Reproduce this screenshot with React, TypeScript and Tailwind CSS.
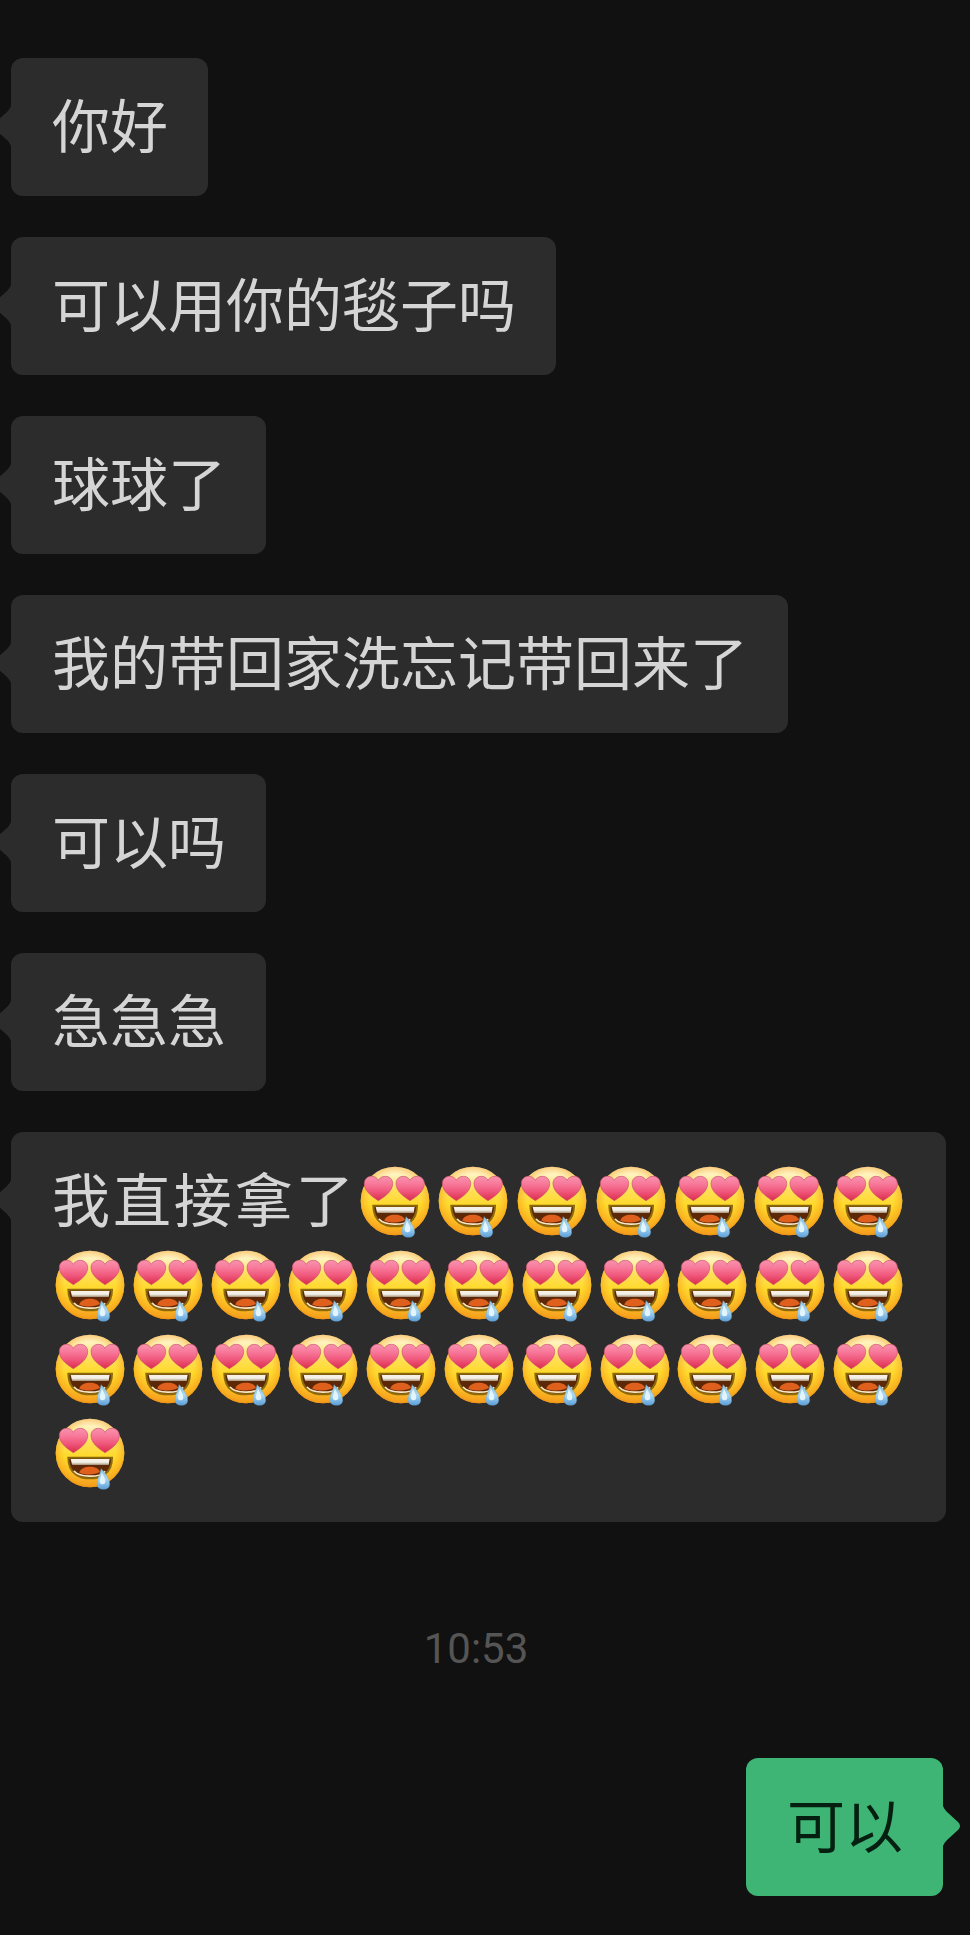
import type { ReactNode } from "react"

const messages = ["你好", "可以用你的毯子吗", "球球了", "我的带回家洗忘记带回来了", "可以吗", "急急急"]
const lastMessage = "我直接拿了"
const emojiCount = 30

function EmojiDefs() {
    return <svg className="absolute h-0 w-0" aria-hidden="true">
        <defs>
            <linearGradient id="face" x1="0" y1="0" x2="0" y2="1">
                <stop offset="0" stopColor="#fff3d2" />
                <stop offset="0.12" stopColor="#fff3bd" />
                <stop offset="0.34" stopColor="#ffe05a" />
                <stop offset="0.55" stopColor="#ffd92c" />
                <stop offset="0.8" stopColor="#fdc026" />
                <stop offset="1" stopColor="#f5a020" />
            </linearGradient>
            <radialGradient id="rim" cx="0.5" cy="0.48" r="0.53">
                <stop offset="0.7" stopColor="#f8a51c" stopOpacity="0" />
                <stop offset="0.92" stopColor="#f59d18" stopOpacity="0.5" />
                <stop offset="1" stopColor="#e88a12" stopOpacity="0.95" />
            </radialGradient>
            <linearGradient id="heart" x1="0" y1="0" x2="0" y2="1">
                <stop offset="0" stopColor="#f792ae" />
                <stop offset="0.3" stopColor="#f87a9b" />
                <stop offset="0.6" stopColor="#f05a7e" />
                <stop offset="1" stopColor="#dc2c4c" />
            </linearGradient>
            <linearGradient id="drop" x1="0" y1="0" x2="0" y2="1">
                <stop offset="0" stopColor="#8dbcd8" />
                <stop offset="0.5" stopColor="#a9d7f2" />
                <stop offset="1" stopColor="#5c9fda" />
            </linearGradient>
            <path id="heart-shape" d="M42 73C29 64 0 47 0 22C0 8 10 0 22 0C32 0 39 5 42 12C45 5 53 0 63 0C75 0 85 8 85 22C85 47 56 64 42 73Z" />
            <symbol id="drool" viewBox="0 0 228 228">
                <circle cx="114" cy="114" r="103" fill="url(#face)" />
                <circle cx="114" cy="114" r="103" fill="url(#rim)" />
                <use href="#heart-shape" x="22" y="40" fill="url(#heart)" stroke="#c9566a" strokeWidth="2" />
                <use href="#heart-shape" x="117" y="40" fill="url(#heart)" stroke="#c9566a" strokeWidth="2" />
                <path d="M49 128H180C180 150 172 168 158 178C136 194 92 194 71 178C57 168 49 150 49 128Z" fill="#5c2808" stroke="#8c6a0c" strokeWidth="6" />
                <path d="M56 132H173L170 147H60Z" fill="#f5f1e8" />
                <path d="M59 143H171L170 149H61Z" fill="#cfc7b4" />
                <path d="M82 173C86 151 138 149 144 171C130 180 98 181 82 173Z" fill="#df5f1c" />
                <path d="M67 169C82 187 142 189 158 170" fill="none" stroke="#fbe6c4" strokeWidth="5" strokeLinecap="round" />
                <path d="M147 161C154 166 173 190 173 207C173 217 166 223 155 223C143 223 135 217 135 206C135 191 145 177 147 161Z" fill="url(#drop)" stroke="#6b9dbb" strokeWidth="1" />
                <path d="M149 172C153 180 161 192 160 201C159 209 148 210 144 203C141 196 149 184 149 172Z" fill="#e2f4fc" />
            </symbol>
        </defs>
    </svg>
}

function Emoji() {
    return <svg className="h-[76px] w-[76px] shrink-0" role="img" aria-label="色流口水">
        <use href="#drool" />
    </svg>
}

// the arrow always points at the first line of the bubble
function Bubble({ mine = false, children }: { mine?: boolean; children: ReactNode }) {
    return <div className={mine ? "relative rounded-xl bg-[#3eb575] py-[27px] pr-[40px] pl-[41px] text-[#052010]" : "relative rounded-xl bg-[#2c2c2c] py-[27px] pr-[40px] pl-[41px] text-[#d5d5d5]"}>
        <svg viewBox="0 0 18 40" className={mine ? "absolute top-[48px] left-full h-[40px] w-[18px] text-[#3eb575]" : "absolute top-[48px] right-full h-[40px] w-[18px] -scale-x-100 text-[#2c2c2c]"}>
            <path d="M0 0Q1 3 4 6L15 16Q19 20 15 24L4 34Q1 37 0 40Z" fill="currentColor" />
        </svg>
        {children}
    </div>
}

export default function App() {
    return <main className="min-h-screen overflow-x-hidden bg-[#111111] pt-[58px] pb-[39px] font-['Noto_Sans_CJK_SC',sans-serif] text-[58px] leading-[76px]">
        <EmojiDefs />
        <div className="flex flex-col items-start gap-[41px] pl-[11px] pr-6">
            {messages.map(message => <Bubble key={message}><p className="pb-2">{message}</p></Bubble>)}
            <Bubble>
                <p className="flex flex-wrap justify-between">
                    {lastMessage.split("").map(char => <span key={char} className="pb-2">{char}</span>)}
                    {Array.from({ length: emojiCount }, (_, index) => <span key={index} className="flex h-[84px] items-center"><Emoji /></span>)}
                </p>
            </Bubble>
        </div>
        <p className="mt-[97px] mb-[79px] pr-[18px] text-center font-[Roboto,sans-serif] text-[42px] leading-[60px] text-[#555555]">10:53</p>
        <div className="flex justify-end pr-[27px]">
            <Bubble mine><p className="pb-2">可以</p></Bubble>
        </div>
    </main>
}
